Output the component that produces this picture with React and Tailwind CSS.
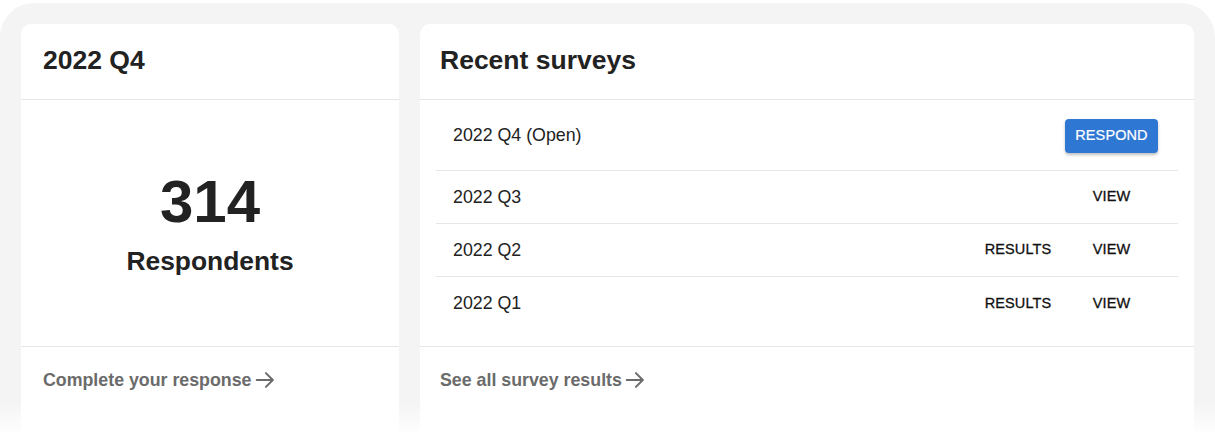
import React from "react";

function ArrowRight() {
  return (
    <svg width="22" height="22" viewBox="0 0 24 24" fill="none" stroke="currentColor" strokeWidth="2.2" strokeLinecap="round" strokeLinejoin="round" className="ml-[2px]">
      <path d="M3 12h17" />
      <path d="M13 4.5l7.5 7.5-7.5 7.5" />
    </svg>
  );
}

function Row({ name, first, results, view, respond, last }) {
  return (
    <div className={`flex items-center pl-[17px] pr-[20px] ${first ? "h-[71px] pt-[1px]" : "h-[53px]"} ${last ? "" : "border-b border-[#e6e6e6]"}`}>
      <div className="flex-1 text-[17.8px] text-[#222]">{name}</div>
      <div className="flex items-center">
        {results && (
          <div className="w-[94px] text-center text-[14.5px] text-[#111] tracking-[0.1px] [-webkit-text-stroke:0.3px_#111]">RESULTS</div>
        )}
        {view && (
          <div className="w-[93px] text-center text-[14.5px] text-[#111] tracking-[0.1px] [-webkit-text-stroke:0.3px_#111]">VIEW</div>
        )}
        {respond && (
          <div className="w-[93px] h-[34px] flex items-center justify-center rounded-[4px] bg-[#2e78d3] text-white text-[14.5px] tracking-[0.1px] [-webkit-text-stroke:0.2px_#fff] shadow-[0_2px_3px_rgba(0,0,0,0.25)]">RESPOND</div>
        )}
      </div>
    </div>
  );
}

export default function App() {
  return (
    <div className="relative h-[435px] overflow-hidden bg-white" style={{ fontFamily: '"Liberation Sans", Arial, sans-serif' }}>
      <div className="mt-[3px] h-[480px] rounded-[34px] bg-[#f4f4f4] px-[21px] pt-[21px] flex gap-[21px]">
        <div className="w-[378px] h-[430px] bg-white rounded-[10px] flex flex-col">
          <div className="h-[76px] flex items-center px-[22px] pb-[2px] border-b border-[#e6e6e6]">
            <h2 className="text-[26.5px] font-bold text-[#222]">2022 Q4</h2>
          </div>
          <div className="h-[247px] flex flex-col items-center justify-center border-b border-[#e6e6e6]">
            <div className="text-[60px] leading-[64px] font-bold text-[#222]">314</div>
            <div className="text-[26.4px] leading-[30px] font-bold text-[#222] mt-[12px]">Respondents</div>
          </div>
          <div className="px-[22px] pt-[20px] flex items-center text-[17.8px] font-bold text-[#6b6b6b]">
            Complete your response
            <ArrowRight />
          </div>
        </div>
        <div className="flex-1 h-[430px] bg-white rounded-[10px] flex flex-col">
          <div className="h-[76px] flex items-center px-[20px] pb-[2px] border-b border-[#e6e6e6]">
            <h2 className="text-[26.5px] font-bold text-[#222]">Recent surveys</h2>
          </div>
          <div className="h-[247px] px-[16px] border-b border-[#e6e6e6]">
            <Row name="2022 Q4 (Open)" first respond />
            <Row name="2022 Q3" view />
            <Row name="2022 Q2" results view />
            <Row name="2022 Q1" results view last />
          </div>
          <div className="px-[20px] pt-[20px] flex items-center text-[17.8px] font-bold text-[#6b6b6b]">
            See all survey results
            <ArrowRight />
          </div>
        </div>
      </div>
      <div className="absolute left-0 right-0 bottom-0 h-[34px] bg-gradient-to-b from-white/0 to-white" />
    </div>
  );
}
